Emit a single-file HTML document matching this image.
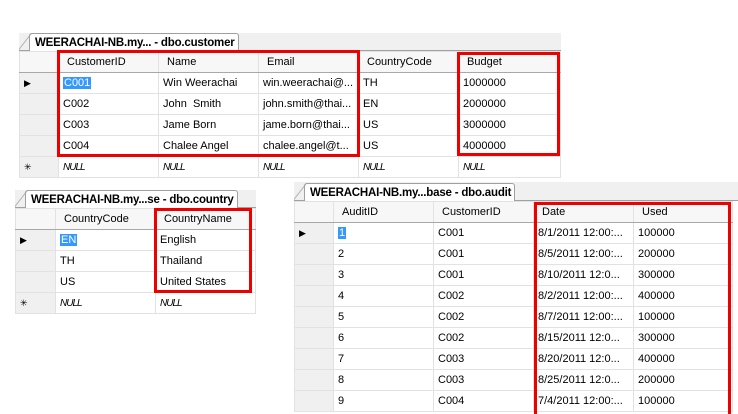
<!DOCTYPE html>
<html style="overflow:hidden"><head><meta charset="utf-8"><style>
html,body{margin:0;width:738px;height:414px;overflow:hidden}
body{background:#fff;position:relative;font-family:"Liberation Sans",sans-serif;font-size:11px;color:#000}
.p{position:absolute;background:#fff;overflow:hidden}
.strip{position:absolute;left:0;right:0;top:0;background:#f0f0f0;border-bottom:1px solid #a0a0a0}
.tab{position:absolute;left:10px;bottom:-1px;background:#fff;border:1px solid #a0a0a0;border-bottom:none;border-radius:3px 3px 0 0;font-weight:bold;font-size:11.5px;padding:1px 3px 0 5px;line-height:16px;white-space:nowrap;letter-spacing:-0.2px}
.tab:before{content:"";position:absolute;left:-12px;bottom:0;width:14px;height:18px;background:linear-gradient(to top left,transparent 48%,#a0a0a0 50%,transparent 55%)}
table{position:absolute;left:0;border-collapse:collapse;table-layout:fixed}
td{height:20px;padding:0 0 0 4px;border:1px solid #e2e2e2;white-space:nowrap;overflow:hidden}
tr.h td{background:#f7f7f7;border-bottom:1px solid #a8a8a8;padding-left:8px;height:20px}
td.r{background:#f0f0f0;padding:0 0 0 4px;font-size:9px}
.n{font-style:italic;font-size:10px;letter-spacing:-1px}
.sel{background:#3399ff;color:#fff;padding:0 1px}
.red{position:absolute;border:3px solid #e00}
</style></head><body>

<div class="p" style="left:19px;top:33px;width:542px;height:145px">
<div class="strip" style="height:17px"><div class="tab">WEERACHAI-NB.my... - dbo.customer</div></div>
<table style="top:18px;width:541px">
<col style="width:39px"><col style="width:100px"><col style="width:100px"><col style="width:100px"><col style="width:100px"><col style="width:102px">
<tr class="h"><td class="r"></td><td>CustomerID</td><td>Name</td><td>Email</td><td>CountryCode</td><td>Budget</td></tr>
<tr><td class="r">&#9654;</td><td><span class="sel">C001</span></td><td>Win Weerachai</td><td>win.weerachai@...</td><td>TH</td><td>1000000</td></tr>
<tr><td class="r"></td><td>C002</td><td>John&nbsp; Smith</td><td>john.smith@thai...</td><td>EN</td><td>2000000</td></tr>
<tr><td class="r"></td><td>C003</td><td>Jame Born</td><td>jame.born@thai...</td><td>US</td><td>3000000</td></tr>
<tr><td class="r"></td><td>C004</td><td>Chalee Angel</td><td>chalee.angel@t...</td><td>US</td><td>4000000</td></tr>
<tr><td class="r">&#10035;</td><td class="n">NULL</td><td class="n">NULL</td><td class="n">NULL</td><td class="n">NULL</td><td class="n">NULL</td></tr>
</table></div>
<div class="red" style="left:57px;top:50px;width:297px;height:101px"></div>
<div class="red" style="left:457px;top:52px;width:97px;height:98px"></div>

<div class="p" style="left:15px;top:190px;width:241px;height:125px">
<div class="strip" style="height:17px"><div class="tab">WEERACHAI-NB.my...se - dbo.country</div></div>
<table style="top:18px;width:240px">
<col style="width:40px"><col style="width:100px"><col style="width:100px">
<tr class="h"><td class="r"></td><td>CountryCode</td><td>CountryName</td></tr>
<tr><td class="r">&#9654;</td><td><span class="sel">EN</span></td><td>English</td></tr>
<tr><td class="r"></td><td>TH</td><td>Thailand</td></tr>
<tr><td class="r"></td><td>US</td><td>United States</td></tr>
<tr><td class="r">&#10035;</td><td class="n">NULL</td><td class="n">NULL</td></tr>
</table></div>
<div class="red" style="left:154px;top:208px;width:92px;height:79px"></div>

<div class="p" style="left:294px;top:182px;width:444px;height:232px">
<div class="strip" style="height:18px"><div class="tab">WEERACHAI-NB.my...base - dbo.audit</div></div>
<table style="top:19px;width:438px">
<col style="width:39px"><col style="width:100px"><col style="width:100px"><col style="width:100px"><col style="width:99px">
<tr class="h"><td class="r"></td><td>AuditID</td><td>CustomerID</td><td>Date</td><td>Used</td></tr>
<tr><td class="r">&#9654;</td><td><span class="sel">1</span></td><td>C001</td><td>8/1/2011 12:00:...</td><td>100000</td></tr>
<tr><td class="r"></td><td>2</td><td>C001</td><td>8/5/2011 12:00:...</td><td>200000</td></tr>
<tr><td class="r"></td><td>3</td><td>C001</td><td>8/10/2011 12:0...</td><td>300000</td></tr>
<tr><td class="r"></td><td>4</td><td>C002</td><td>8/2/2011 12:00:...</td><td>400000</td></tr>
<tr><td class="r"></td><td>5</td><td>C002</td><td>8/7/2011 12:00:...</td><td>100000</td></tr>
<tr><td class="r"></td><td>6</td><td>C002</td><td>8/15/2011 12:0...</td><td>300000</td></tr>
<tr><td class="r"></td><td>7</td><td>C003</td><td>8/20/2011 12:0...</td><td>400000</td></tr>
<tr><td class="r"></td><td>8</td><td>C003</td><td>8/25/2011 12:0...</td><td>200000</td></tr>
<tr><td class="r"></td><td>9</td><td>C004</td><td>7/4/2011 12:00:...</td><td>100000</td></tr>
</table></div>
<div class="red" style="left:534px;top:202px;width:191px;height:209px;border-bottom:none"></div>
</body></html>
